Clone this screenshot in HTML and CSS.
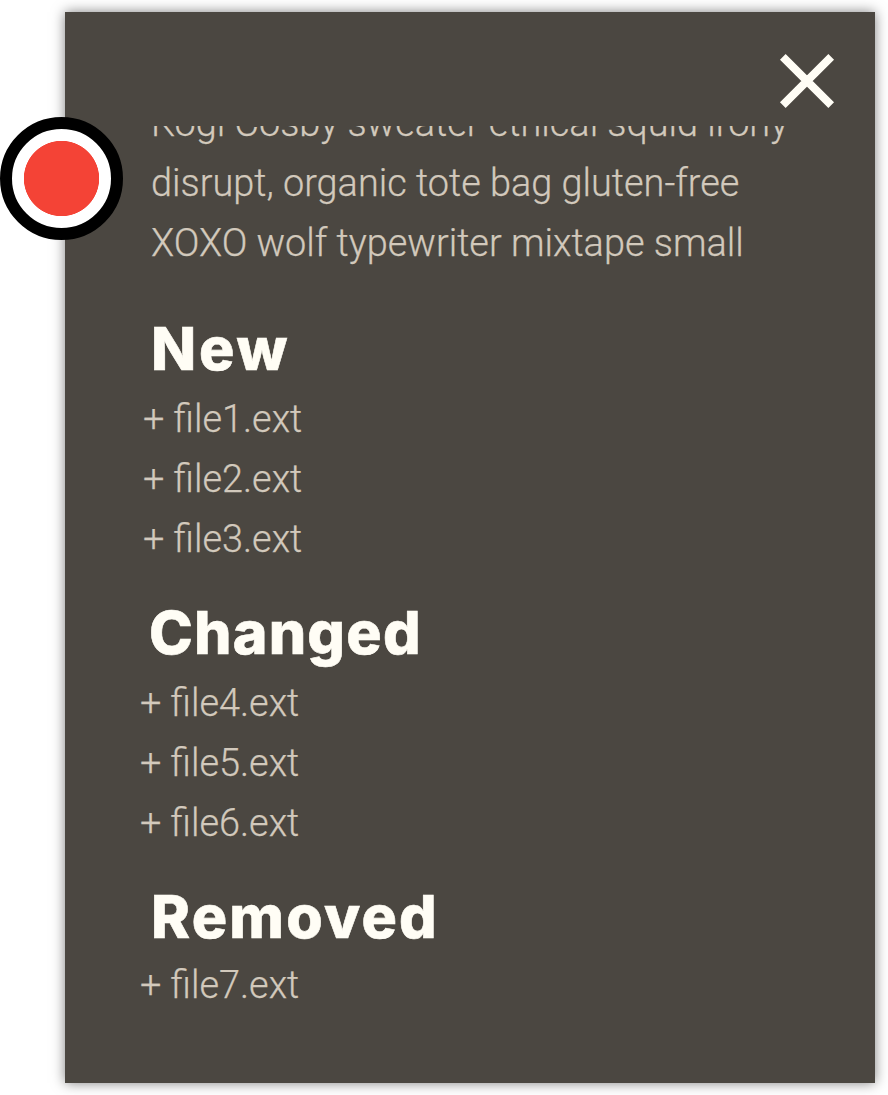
FILE: index.html
```
<!DOCTYPE html>
<html lang="en">
<head>
<meta charset="utf-8">
<title>Changes</title>
<link rel="stylesheet" href="styles.css">
</head>
<body>
<main class="panel">
  <header class="panel-header">
    <button class="close" aria-label="Close">
      <svg viewBox="0 0 54 54"><path d="M2.8 2.8 51.2 51.2M51.2 2.8 2.8 51.2"/></svg>
    </button>
  </header>
  <div class="scroll">
    <p class="intro"><span class="line">Kogi Cosby sweater ethical squid irony</span><span class="line">disrupt, organic tote bag gluten-free</span><span class="line">XOXO wolf typewriter mixtape small</span></p>
    <section class="group">
      <h2 class="title new">New</h2>
      <ul class="files first"><li>+ file1.ext</li><li>+ file2.ext</li><li>+ file3.ext</li></ul>
    </section>
    <section class="group">
      <h2 class="title changed">Changed</h2>
      <ul class="files"><li>+ file4.ext</li><li>+ file5.ext</li><li>+ file6.ext</li></ul>
    </section>
    <section class="group last">
      <h2 class="title removed">Removed</h2>
      <ul class="files"><li>+ file7.ext</li></ul>
    </section>
  </div>
  <span class="record"></span>
</main>
</body>
</html>
```
FILE: styles.css
```
* { box-sizing: border-box; }
body { margin: 0; height: 1095px; padding: 12px 0 12px 65px; background: #fff; }
.panel {
  position: relative;
  width: 810px;
  height: 1071px;
  background: #4b4741;
  box-shadow: 0 0 12px rgba(0, 0, 0, .5);
  font-family: Roboto, sans-serif;
}
.panel-header {
  display: flex;
  justify-content: flex-end;
  height: 114px;
  padding: 42px 41px 0 0;
}
.close { width: 54px; height: 54px; padding: 0; border: 0; background: none; }
.close svg { display: block; width: 54px; height: 54px; overflow: visible; fill: none; stroke: #fffdf5; stroke-width: 8; }
.scroll { height: 957px; overflow: hidden; padding-left: 75px; }
.intro { margin: -33px 0 0 11px; }
.intro, .files {
  color: #d2c9bc;
  font-size: 37.86px;
  font-weight: 300;
  line-height: 60px;
  white-space: nowrap;
  -webkit-text-stroke: .25px #d2c9bc;
}
.line { display: block; }
.group { height: 284px; padding-top: 37px; }
.title {
  height: 79px;
  margin: 0 0 0 11px;
  color: #fffdf5;
  font-family: Inter, sans-serif;
  font-size: 59px;
  font-weight: 800;
  line-height: 77px;
  -webkit-text-stroke: .6px #fffdf5;
}
.new { letter-spacing: 2.8px; }
.changed { margin-left: 9px; letter-spacing: 1.2px; }
.removed { letter-spacing: 2.2px; }
.last .title { height: 77px; }
.files { margin: 0; padding: 0; list-style: none; }
.first { padding-left: 3px; }
.record {
  position: absolute;
  left: -65px;
  top: 105px;
  width: 123px;
  height: 123px;
  border: 12px solid #000;
  border-radius: 50%;
  background: radial-gradient(circle, #f44336 37.3px, #fff 38px);
}
```
